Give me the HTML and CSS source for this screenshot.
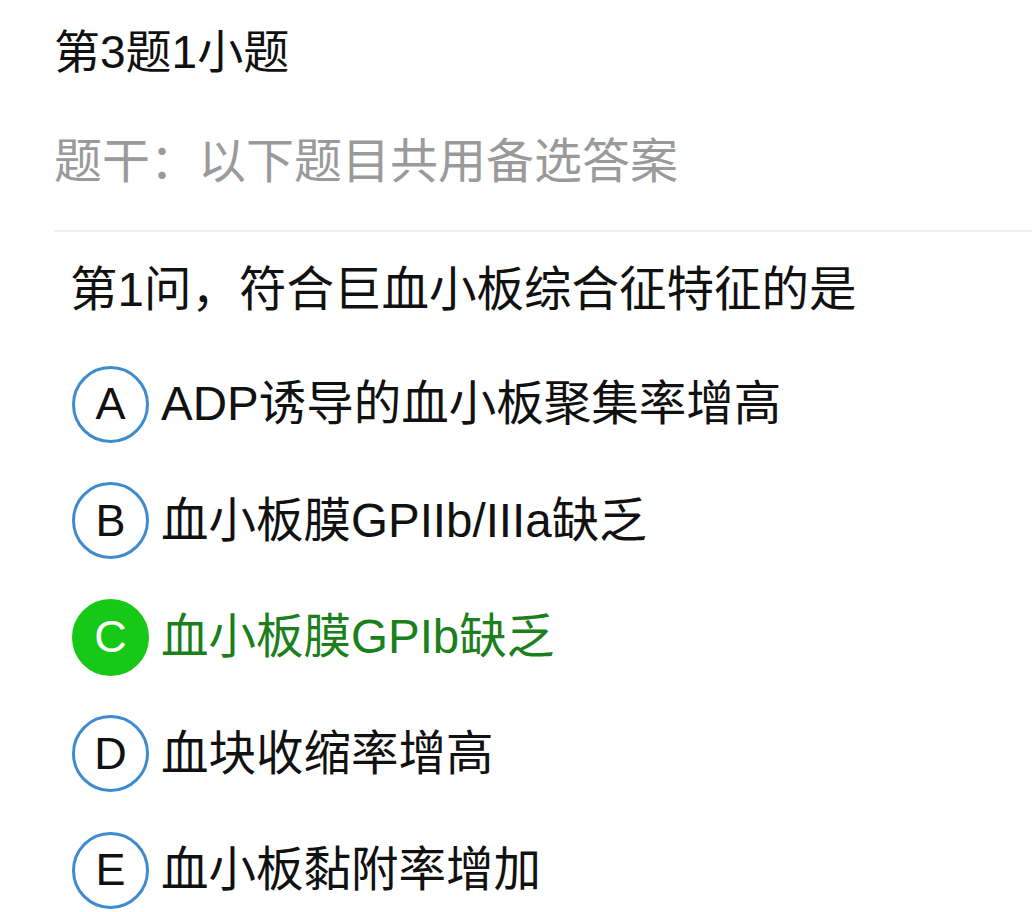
FILE: index.html
```html
<!DOCTYPE html>
<html lang="zh-CN">
<head>
  <meta charset="UTF-8">
  <meta name="viewport" content="width=device-width, initial-scale=1.0">
  <title>第3题1小题</title>
  <link rel="stylesheet" href="styles.css">
</head>
<body>
  <div class="pagina">
    <h1 class="titulo">第3题1小题</h1>
    <p class="tigan">题干：以下题目共用备选答案</p>
    <div class="divisor"></div>
    <p class="pergunta">第1问，符合巨血小板综合征特征的是</p>
    <ul class="opcoes">
      <li class="opcao"><span class="letra">A</span><span class="texto">ADP诱导的血小板聚集率增高</span></li>
      <li class="opcao"><span class="letra">B</span><span class="texto">血小板膜GPIIb/IIIa缺乏</span></li>
      <li class="opcao certa"><span class="letra">C</span><span class="texto">血小板膜GPIb缺乏</span></li>
      <li class="opcao"><span class="letra">D</span><span class="texto">血块收缩率增高</span></li>
      <li class="opcao"><span class="letra">E</span><span class="texto">血小板黏附率增加</span></li>
    </ul>
  </div>
</body>
</html>
```

FILE: styles.css
```css
:root {
  --texto: #111;
  --cinza: #9a9a9a;
  --linha: #efefef;
  --azul: #3f8bcf;
  --verde: #17c917;
  --verde-escuro: #1b7f1b;
}

* {
  box-sizing: border-box;
  margin: 0;
  padding: 0;
}

body {
  background: #fff;
  color: var(--texto);
  font-family: "Liberation Sans", "Noto Sans CJK SC", sans-serif;
}

.pagina {
  padding: 20px 0 0 54px;
}

.titulo {
  font-size: 46px;
  font-weight: normal;
  line-height: 64px;
}

.tigan {
  margin-top: 46px;
  font-size: 48px;
  line-height: 64px;
  color: var(--cinza);
}

.divisor {
  margin-top: 36px;
  height: 2px;
  background: var(--linha);
}

.pergunta {
  margin-top: 26px;
  padding-left: 16px;
  font-size: 47.5px;
  line-height: 64px;
}

.opcoes {
  list-style: none;
  margin-top: 43px;
  padding-left: 18px;
  display: flex;
  flex-direction: column;
  gap: 38.5px;
}

.opcao {
  display: flex;
  align-items: center;
  gap: 12px;
  height: 78px;

  .letra {
    width: 77px;
    height: 77px;
    border: 3px solid var(--azul);
    border-radius: 50%;
    display: flex;
    align-items: center;
    justify-content: center;
    font-size: 45px;
    flex-shrink: 0;
  }
  .texto {
    font-size: 47.5px;
    line-height: 64px;
  }
  &.certa {
    .letra {
      background: var(--verde);
      border-color: var(--verde);
      color: #fff;
    }
    .texto {
      color: var(--verde-escuro);
    }
  }
}
```
